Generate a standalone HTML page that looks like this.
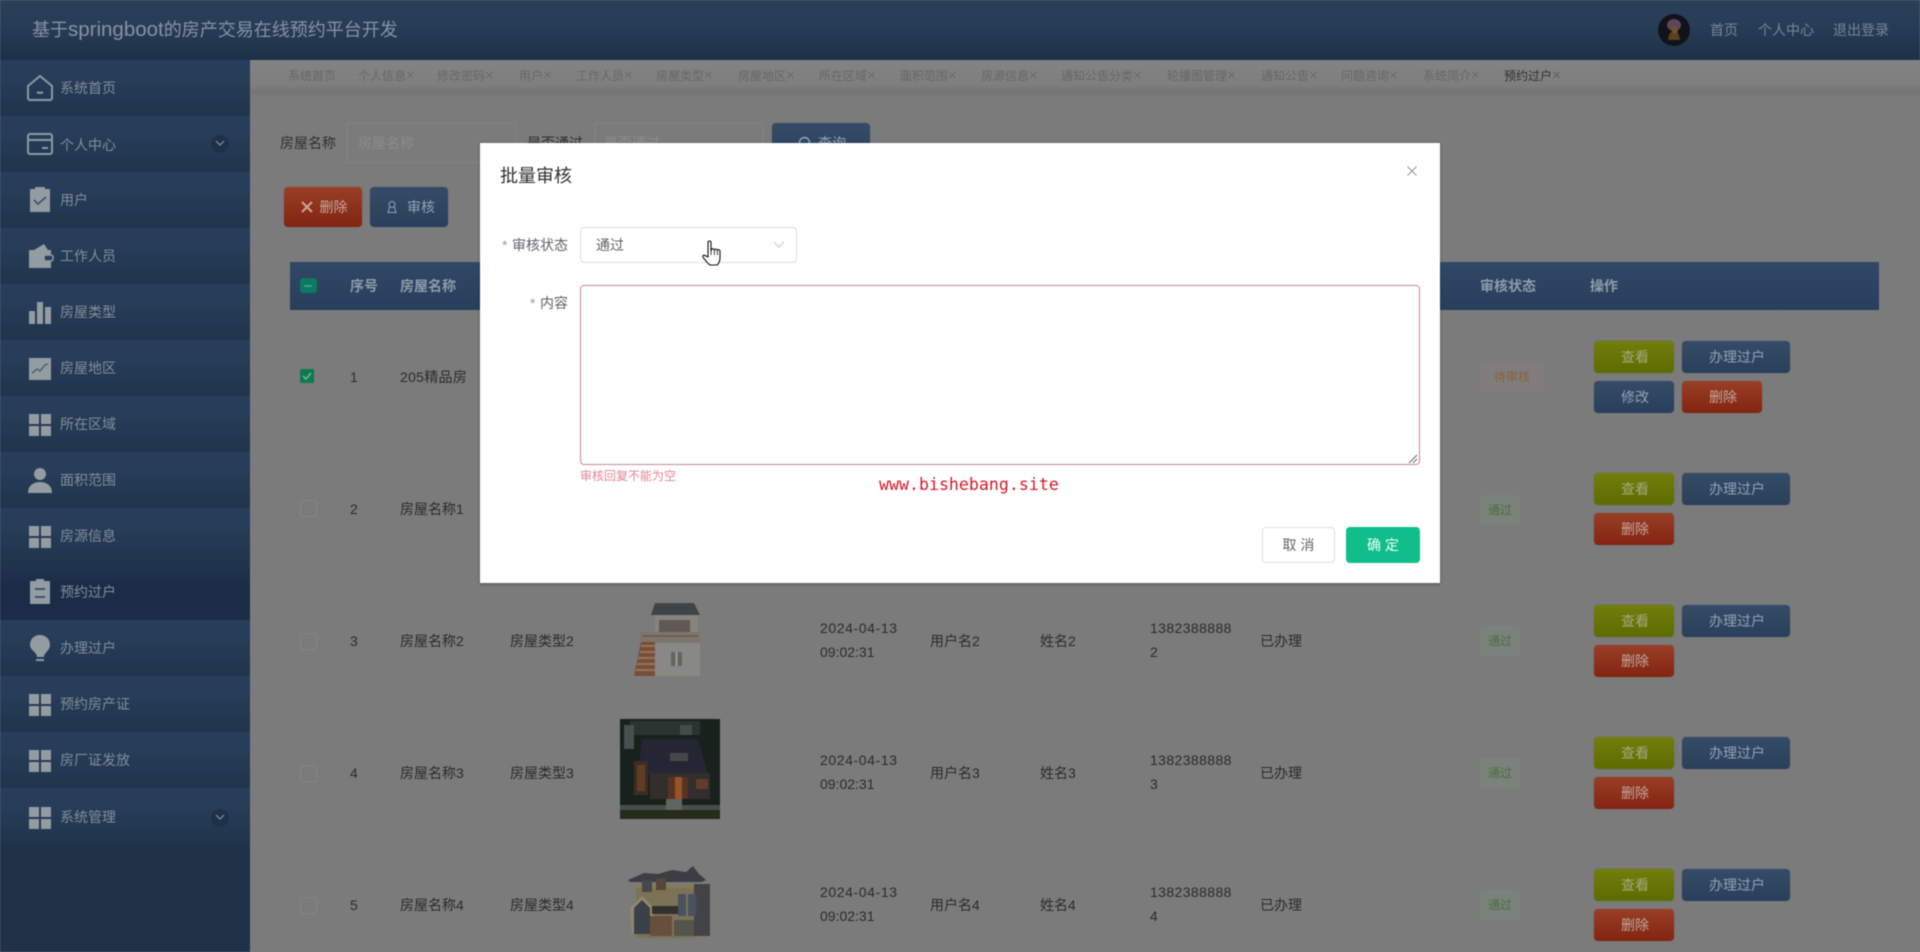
<!DOCTYPE html>
<html lang="zh-CN"><head><meta charset="utf-8"><title>批量审核</title>
<style>
html,body{margin:0;padding:0;width:1920px;height:952px;overflow:hidden;background:#7b7b7b}
body{position:relative;font-family:"Liberation Sans","Noto Sans CJK SC",sans-serif;font-size:14px;color:#2b2b2b;filter:blur(.4px)}
.a,.t,.b,.tag,.it{position:absolute}
.t{white-space:nowrap;line-height:20px}
#head{left:0;top:0;width:1920px;height:60px;background:linear-gradient(#2a4056,#283e58 40%,#1d3047)}
#side{left:0;top:60px;width:250px;height:892px;background:#203148}
.it{left:0;width:250px;height:56px;background:linear-gradient(#283f5c,#273d59 30%,#20344b)}
.it.on{background:linear-gradient(#21344f,#1b2c48 40%,#1c2d4a)}
.it span{position:absolute;left:60px;top:18px;line-height:20px;color:#828e9a;white-space:nowrap}
.it svg{position:absolute;left:26px;top:14px}
.chev{position:absolute;left:211px;top:19px;width:18px;height:18px;border-radius:9px;background:#213047}
.chev svg{position:absolute}
#tabs{left:250px;top:60px;width:1670px;height:34px;background:linear-gradient(#838383,#7f7f7f 70%,#747474)}
.tab{font-size:12px;color:#676767;top:66px}
.tab i{font-style:normal;font-size:15px;line-height:12px;color:#6b6b6b}
.b{height:32px;line-height:32px;text-align:center;border-radius:4px;width:80px;text-indent:2px;box-shadow:0 0 1px rgba(0,0,0,.25)}
.g{background:linear-gradient(#717e0c,#5e6c00);color:#a3a982}
.bl{background:linear-gradient(#344c68,#28405c);color:#94a2b2}
.r{background:linear-gradient(#983f26,#832411);color:#c4a79e}
.w{width:108px}
.tag{left:1480px;height:30px;line-height:30px;font-size:12px;text-align:center;border-radius:4px}
.tag.ok{width:40px;background:#7b817b;color:#48703e}
.tag.wait{width:64px;background:#817d7c;color:#866437}
.cb{position:absolute;left:300px;width:15px;height:15px;border:1px solid #858585;border-radius:2px}
#modal{left:480px;top:143px;width:960px;height:440px;background:#fff;box-shadow:0 1px 3px rgba(0,0,0,.3)}
.m{color:#606266}
</style></head><body>

<div class="a" id="head"></div>
<div class="t" style="left:32px;top:20px;font-size:18px;color:#8792a2">基于<span style="font-size:20.5px">springboot</span>的房产交易在线预约平台开发</div>
<svg class="a" style="left:1658px;top:14px" width="32" height="32" viewBox="0 0 32 32"><circle cx="16" cy="16" r="16" fill="#12121a"/><ellipse cx="16" cy="11" rx="7" ry="6" fill="#5f4657"/><path d="M10 26c1-7 3-9 6-9s5 2 6 9z" fill="#5a401b"/><ellipse cx="17" cy="16" rx="3" ry="4" fill="#6f522c"/></svg>
<div class="t" style="left:1710px;top:20px;color:#788596">首页</div>
<div class="t" style="left:1758px;top:20px;color:#788596">个人中心</div>
<div class="t" style="left:1833px;top:20px;color:#788596">退出登录</div>

<div class="a" id="side"></div>
<div class="it" style="top:60px"><svg width="28" height="28" viewBox="0 0 28 28" fill="none" stroke="#8c99a2" stroke-width="2"><path d="M2 12 14 2l12 10v12a2 2 0 0 1-2 2H4a2 2 0 0 1-2-2z"/><path d="M11 18q3 2 6 0"/></svg><span>系统首页</span></div>
<div class="it" style="top:116px"><svg width="28" height="28" viewBox="0 0 28 28" fill="none" stroke="#8c99a2" stroke-width="2"><rect x="2" y="4" width="24" height="20" rx="2"/><path d="M2 10h24M16 18h6"/></svg><span style="top:19px">个人中心</span><i class="chev"><svg style="left:4px;top:5px" width="10" height="8" viewBox="0 0 10 8" fill="none" stroke="#84929f" stroke-width="1.2"><path d="M1 1l4 4 4-4"/></svg></i></div>
<div class="it" style="top:172px"><svg width="28" height="28" viewBox="0 0 28 28"><rect x="4" y="3" width="20" height="23" fill="#929ca1"/><rect x="9" y="1" width="10" height="4" rx="1" fill="#929ca1"/><path d="M8 14l4 4 8-7" fill="none" stroke="#3d5068" stroke-width="1.6"/></svg><span>用户</span></div>
<div class="it" style="top:228px"><svg width="28" height="28" viewBox="0 0 28 28"><path d="M3 8h22v18H3z" fill="#929ca1"/><path d="M8 8l10-6 4 6z" fill="#929ca1"/><rect x="18" y="13" width="9" height="6" rx="2" fill="#2a4060" stroke="#929ca1" stroke-width="1.5"/></svg><span>工作人员</span></div>
<div class="it" style="top:284px"><svg width="28" height="28" viewBox="0 0 28 28" fill="#929ca1"><rect x="3" y="13" width="6" height="13"/><rect x="11" y="4" width="6" height="22"/><rect x="19" y="9" width="6" height="17"/></svg><span>房屋类型</span></div>
<div class="it" style="top:340px"><svg width="28" height="28" viewBox="0 0 28 28"><rect x="3" y="4" width="22" height="22" fill="#929ca1"/><path d="M6 19l5-4 3 2 5-6 3-1" fill="none" stroke="#50606f" stroke-width="1.5"/></svg><span>房屋地区</span></div>
<div class="it" style="top:396px"><svg width="28" height="28" viewBox="0 0 28 28" fill="#929ca1"><rect x="3" y="4" width="10" height="10"/><rect x="15" y="4" width="10" height="10"/><rect x="3" y="16" width="10" height="10"/><rect x="15" y="16" width="10" height="10"/></svg><span>所在区域</span></div>
<div class="it" style="top:452px"><svg width="28" height="28" viewBox="0 0 28 28" fill="#929ca1"><circle cx="14" cy="8" r="6"/><path d="M2 27c0-8 6-11 12-11s12 3 12 11z"/></svg><span>面积范围</span></div>
<div class="it" style="top:508px"><svg width="28" height="28" viewBox="0 0 28 28" fill="#929ca1"><rect x="3" y="4" width="10" height="10"/><rect x="15" y="4" width="10" height="10"/><rect x="3" y="16" width="10" height="10"/><rect x="15" y="16" width="10" height="10"/></svg><span>房源信息</span></div>
<div class="it on" style="top:564px"><svg width="28" height="28" viewBox="0 0 28 28"><rect x="4" y="3" width="20" height="23" rx="1" fill="#929ca1"/><rect x="10" y="1" width="8" height="4" fill="#929ca1"/><path d="M9 11h10M9 19h10" stroke="#2a3d58" stroke-width="1.6"/></svg><span>预约过户</span></div>
<div class="it" style="top:620px"><svg width="28" height="28" viewBox="0 0 28 28"><path d="M14 1c6 0 10 4 10 10 0 4-3 6-5 9-1 1-1 3-1 3h-7s0-2-1-3c-2-3-6-5-6-9C4 5 8 1 14 1z" fill="#929ca1"/><rect x="10" y="25" width="8" height="2" fill="#929ca1"/></svg><span>办理过户</span></div>
<div class="it" style="top:676px"><svg width="28" height="28" viewBox="0 0 28 28" fill="#929ca1"><rect x="3" y="4" width="10" height="10"/><rect x="15" y="4" width="10" height="10"/><rect x="3" y="16" width="10" height="10"/><rect x="15" y="16" width="10" height="10"/></svg><span>预约房产证</span></div>
<div class="it" style="top:732px"><svg width="28" height="28" viewBox="0 0 28 28" fill="#929ca1"><rect x="3" y="4" width="10" height="10"/><rect x="15" y="4" width="10" height="10"/><rect x="3" y="16" width="10" height="10"/><rect x="15" y="16" width="10" height="10"/></svg><span>房厂证发放</span></div>
<div class="it" style="top:788px"><svg width="28" height="28" viewBox="0 0 28 28" fill="#929ca1"><rect x="3" y="5" width="10" height="10"/><rect x="15" y="5" width="10" height="10"/><rect x="3" y="17" width="10" height="10"/><rect x="15" y="17" width="10" height="10"/></svg><span style="top:19px">系统管理</span><i class="chev" style="top:21px"><svg style="left:4px;top:5px" width="10" height="8" viewBox="0 0 10 8" fill="none" stroke="#84929f" stroke-width="1.2"><path d="M1 1l4 4 4-4"/></svg></i></div>

<div class="a" id="tabs"></div>
<div class="t tab" style="left:288px">系统首页</div>
<div class="t tab" style="left:358px">个人信息<i>×</i></div>
<div class="t tab" style="left:437px">修改密码<i>×</i></div>
<div class="t tab" style="left:519px">用户<i>×</i></div>
<div class="t tab" style="left:576px">工作人员<i>×</i></div>
<div class="t tab" style="left:656px">房屋类型<i>×</i></div>
<div class="t tab" style="left:738px">房屋地区<i>×</i></div>
<div class="t tab" style="left:819px">所在区域<i>×</i></div>
<div class="t tab" style="left:900px">面积范围<i>×</i></div>
<div class="t tab" style="left:981px">房源信息<i>×</i></div>
<div class="t tab" style="left:1061px">通知公告分类<i>×</i></div>
<div class="t tab" style="left:1167px">轮播图管理<i>×</i></div>
<div class="t tab" style="left:1261px">通知公告<i>×</i></div>
<div class="t tab" style="left:1341px">问题咨询<i>×</i></div>
<div class="t tab" style="left:1423px">系统简介<i>×</i></div>
<div class="t tab" style="left:1504px;color:#303030">预约过户<i style="color:#5f5f5f">×</i></div>

<div class="t" style="left:280px;top:133px;color:#303030">房屋名称</div>
<div class="a" style="left:346px;top:123px;width:168px;height:38px;border:1px solid #848484;border-radius:2px"></div>
<div class="t" style="left:358px;top:133px;color:#8c8c8c">房屋名称</div>
<div class="t" style="left:527px;top:133px;color:#303030">是否通过</div>
<div class="a" style="left:594px;top:123px;width:167px;height:38px;border:1px solid #848484;border-radius:2px"></div>
<div class="t" style="left:604px;top:133px;color:#8c8c8c">是否通过</div>
<div class="b bl" style="left:772px;top:123px;width:98px;height:40px;line-height:40px"><svg width="14" height="14" viewBox="0 0 14 14" fill="none" stroke="#94a2b2" stroke-width="1.4" style="vertical-align:-2px;margin-right:6px"><circle cx="6.500" cy="6.500" r="5"/><path d="M10 10l3 3"/></svg>查询</div>

<div class="b r" style="left:284px;top:187px;width:78px;height:40px;line-height:40px"><svg width="12" height="12" viewBox="0 0 12 12" stroke="#cca59a" stroke-width="2" style="vertical-align:-1px;margin-right:7px"><path d="M1 1l10 10M11 1 1 11"/></svg>删除</div>
<div class="b bl" style="left:370px;top:187px;width:78px;height:40px;line-height:40px"><svg width="14" height="14" viewBox="0 0 14 14" fill="none" stroke="#94a2b4" style="vertical-align:-2px;margin-right:8px"><circle cx="7" cy="4.500" r="3"/><path d="M4.500 7 3 12.500h8L9.500 7"/></svg>审核</div>

<div class="a" style="left:290px;top:262px;width:1589px;height:48px;background:linear-gradient(#304966,#2b4260 60%,#273e5c)"></div>
<div class="a" style="left:300px;top:278px;width:17px;height:15px;background:#0a7a60;border-radius:3px"></div>
<div class="a" style="left:304px;top:285px;width:8px;height:2px;background:#469884"></div>
<div class="t" style="left:350px;top:276px;font-weight:bold;color:#909ca9">序号</div>
<div class="t" style="left:400px;top:276px;font-weight:bold;color:#909ca9">房屋名称</div>
<div class="t" style="left:1480px;top:276px;font-weight:bold;color:#909ca9">审核状态</div>
<div class="t" style="left:1590px;top:276px;font-weight:bold;color:#909ca9">操作</div>

<div class="a" style="left:300px;top:369px;width:14px;height:14px;background:#0d7a52;border-radius:1px"></div>
<svg class="a" style="left:300px;top:369px" width="14" height="14" viewBox="0 0 14 14" fill="none" stroke="#85b899" stroke-width="1.400"><path d="M3 7l3 3 5-6"/></svg>
<div class="t" style="left:350px;top:367px">1</div>
<div class="t" style="left:400px;top:367px;letter-spacing:.3px">205精品房</div>

<div class="cb" style="top:500px"></div>
<div class="t" style="left:350px;top:499px">2</div>
<div class="t" style="left:400px;top:499px">房屋名称1</div>

<div class="cb" style="top:633px"></div>
<div class="t" style="left:350px;top:631px">3</div>
<div class="t" style="left:400px;top:631px">房屋名称2</div>
<div class="t" style="left:510px;top:631px">房屋类型2</div>
<div class="t" style="left:820px;top:616px;line-height:24px"><span style="letter-spacing:.6px">2024-04-13</span><br>09:02:31</div>
<div class="t" style="left:930px;top:631px">用户名2</div>
<div class="t" style="left:1040px;top:631px">姓名2</div>
<div class="t" style="left:1150px;top:616px;line-height:24px;letter-spacing:.4px">1382388888<br>2</div>
<div class="t" style="left:1260px;top:631px">已办理</div>

<div class="cb" style="top:765px"></div>
<div class="t" style="left:350px;top:763px">4</div>
<div class="t" style="left:400px;top:763px">房屋名称3</div>
<div class="t" style="left:510px;top:763px">房屋类型3</div>
<div class="t" style="left:820px;top:748px;line-height:24px"><span style="letter-spacing:.6px">2024-04-13</span><br>09:02:31</div>
<div class="t" style="left:930px;top:763px">用户名3</div>
<div class="t" style="left:1040px;top:763px">姓名3</div>
<div class="t" style="left:1150px;top:748px;line-height:24px;letter-spacing:.4px">1382388888<br>3</div>
<div class="t" style="left:1260px;top:763px">已办理</div>

<div class="cb" style="top:897px"></div>
<div class="t" style="left:350px;top:895px">5</div>
<div class="t" style="left:400px;top:895px">房屋名称4</div>
<div class="t" style="left:510px;top:895px">房屋类型4</div>
<div class="t" style="left:820px;top:880px;line-height:24px"><span style="letter-spacing:.6px">2024-04-13</span><br>09:02:31</div>
<div class="t" style="left:930px;top:895px">用户名4</div>
<div class="t" style="left:1040px;top:895px">姓名4</div>
<div class="t" style="left:1150px;top:880px;line-height:24px;letter-spacing:.4px">1382388888<br>4</div>
<div class="t" style="left:1260px;top:895px">已办理</div>

<svg class="a" style="left:632px;top:602px" width="72" height="76" viewBox="0 0 72 76">
<path d="M23 1h39l6 12H19z" fill="#3f4448"/><rect x="23" y="13" width="43" height="20" fill="#87837d"/><rect x="27" y="18" width="31" height="12" fill="#605953"/>
<rect x="8" y="30" width="60" height="10" fill="#7e746b"/><path d="M10 34h56" stroke="#585450" stroke-width="1"/>
<rect x="23" y="41" width="45" height="33" fill="#888885"/><rect x="39" y="50" width="11" height="14" fill="#666560"/><rect x="43.500" y="50" width="2" height="14" fill="#9d9d99"/>
<path d="M2 74l7-34h14v34z" fill="#784e3a"/><path d="M9 44h14M8 50h15M6 56h17M5 62h18M4 68h19" stroke="#94735e" stroke-width="2"/>
</svg>

<svg class="a" style="left:620px;top:719px" width="100" height="100" viewBox="0 0 100 100">
<rect width="100" height="100" fill="#19211d"/><rect x="10" y="2" width="70" height="14" fill="#2a3431"/><rect x="4" y="6" width="10" height="24" fill="#464f51"/><rect x="60" y="6" width="12" height="10" fill="#434c4b"/>
<path d="M22 20h56l10 36H18z" fill="#252633"/><rect x="50" y="34" width="18" height="8" fill="#444948"/>
<rect x="14" y="42" width="14" height="34" fill="#3e2c24"/><rect x="17" y="46" width="8" height="26" fill="#633c25"/>
<rect x="30" y="54" width="60" height="26" fill="#322e2b"/><rect x="48" y="58" width="20" height="22" fill="#583320"/><rect x="55" y="58" width="7" height="22" fill="#97532a"/><rect x="76" y="60" width="12" height="10" fill="#633d2c"/>
<rect x="0" y="86" width="100" height="5" fill="#454d4f"/><rect x="0" y="91" width="100" height="9" fill="#252c1b"/><rect x="46" y="80" width="16" height="11" fill="#60655d"/>
</svg>

<svg class="a" style="left:628px;top:864px" width="86" height="76" viewBox="0 0 86 76">
<path d="M0 16 16 9l14 1 14-4 14 2 7-6 6 8 7 6-4 2H2z" fill="#3b3e44"/><rect x="6" y="20" width="74" height="4" fill="#847a60"/>
<rect x="8" y="24" width="60" height="50" fill="#7c7255"/><rect x="66" y="20" width="16" height="52" fill="#414346"/>
<rect x="14" y="16" width="10" height="12" fill="#46484c"/><rect x="28" y="14" width="10" height="12" fill="#55453c"/>
<path d="M2 44l12-12 12 12v26H4z" fill="#91876a"/><path d="M6 70V44l8-8 8 8v26z" fill="#3b404b"/>
<rect x="24" y="42" width="26" height="8" fill="#30322b"/><rect x="22" y="52" width="22" height="20" fill="#684f3c"/><rect x="50" y="30" width="8" height="22" fill="#4a5160"/><rect x="60" y="30" width="8" height="22" fill="#4a5160"/>
<rect x="46" y="56" width="20" height="16" fill="#55544b"/>
</svg>

<div class="tag wait" style="top:362px">待审核</div>
<div class="b g" style="left:1594px;top:341px">查看</div>
<div class="b bl w" style="left:1682px;top:341px">办理过户</div>
<div class="b bl" style="left:1594px;top:381px">修改</div>
<div class="b r" style="left:1682px;top:381px">删除</div>

<div class="tag ok" style="top:495px">通过</div>
<div class="b g" style="left:1594px;top:473px">查看</div>
<div class="b bl w" style="left:1682px;top:473px">办理过户</div>
<div class="b r" style="left:1594px;top:513px">删除</div>

<div class="tag ok" style="top:626px">通过</div>
<div class="b g" style="left:1594px;top:605px">查看</div>
<div class="b bl w" style="left:1682px;top:605px">办理过户</div>
<div class="b r" style="left:1594px;top:645px">删除</div>

<div class="tag ok" style="top:758px">通过</div>
<div class="b g" style="left:1594px;top:737px">查看</div>
<div class="b bl w" style="left:1682px;top:737px">办理过户</div>
<div class="b r" style="left:1594px;top:777px">删除</div>

<div class="tag ok" style="top:890px">通过</div>
<div class="b g" style="left:1594px;top:869px">查看</div>
<div class="b bl w" style="left:1682px;top:869px">办理过户</div>
<div class="b r" style="left:1594px;top:909px">删除</div>

<div class="a" id="modal"></div>
<div class="t" style="left:500px;top:166px;font-size:18px;color:#303133">批量审核</div>
<svg class="a" style="left:1406px;top:165px" width="12" height="12" viewBox="0 0 12 12" stroke="#909399" stroke-width="1"><path d="M1.500 1.500l9 9M10.500 1.500l-9 9"/></svg>

<div class="t" style="left:502px;top:235px;color:#9a9a9a">*</div>
<div class="t m" style="left:512px;top:235px">审核状态</div>
<div class="a" style="left:580px;top:227px;width:215px;height:34px;border:1px solid #dcdfe6;border-radius:4px"></div>
<div class="t m" style="left:596px;top:235px">通过</div>
<svg class="a" style="left:773px;top:241px" width="12" height="8" viewBox="0 0 12 8" fill="none" stroke="#c8cbd0" stroke-width="1.100"><path d="M1 1l5 5 5-5"/></svg>

<div class="t" style="left:530px;top:293px;color:#9a9a9a">*</div>
<div class="t m" style="left:540px;top:293px">内容</div>
<div class="a" style="left:580px;top:285px;width:838px;height:178px;border:1px solid #c58b98;border-radius:4px"></div>
<svg class="a" style="left:1408px;top:454px" width="10" height="10" viewBox="0 0 10 10" stroke="#666" stroke-width="1"><path d="M1 9l8-8M5 9l4-4"/></svg>
<div class="t" style="left:580px;top:466px;font-size:12px;color:#e08693">审核回复不能为空</div>
<div class="t" style="left:879px;top:475px;font-family:'DejaVu Sans Mono','Liberation Mono',monospace;font-size:16.6px;color:#d8182a">www.bishebang.site</div>

<div class="a" style="left:1262px;top:527px;width:71px;height:34px;border:1px solid #dcdfe6;border-radius:4px;background:#fff;text-align:center;line-height:34px;color:#606266">取 消</div>
<div class="a" style="left:1346px;top:527px;width:74px;height:36px;border-radius:4px;background:#10be8c;text-align:center;line-height:36px;color:#eafff8">确 定</div>

<svg class="a" style="left:702px;top:240px" width="20" height="26" viewBox="0 0 20 26"><path d="M6 2.500a1.500 1.500 0 0 1 3 0V11l.5-1.500a1.500 1.500 0 0 1 2.800.5l.4-.3a1.400 1.400 0 0 1 2.500.6l.4-.2a1.400 1.400 0 0 1 2.400 1V18c0 3-1.500 6-3 7H8c-1.500-1-6-6-7-8-.6-1.500 1-2.500 2-1.500L6 17z" fill="#fff" stroke="#111" stroke-width="1.100"/><path d="M9 11v4M12.400 10.500V15M15.400 11v4" stroke="#111" stroke-width=".8"/></svg>
</body></html>
